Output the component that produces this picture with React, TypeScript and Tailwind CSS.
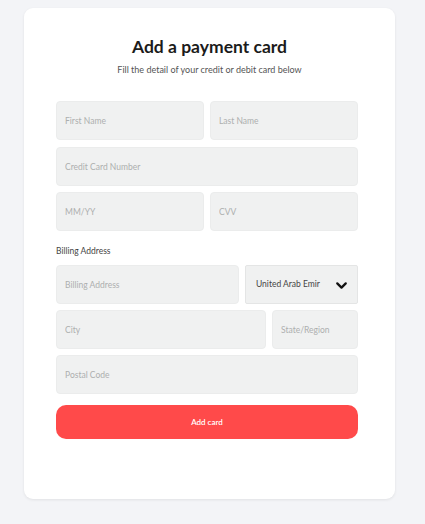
import { ChevronDown } from "lucide-react";

function Field({ placeholder, className = "" }: { placeholder: string; className?: string }) {
  return (
    <input
      placeholder={placeholder}
      className={`h-[39px] min-w-0 rounded-[4px] border border-[#ebecec] bg-[#f0f1f1] px-[8px] text-[8.5px] text-[#555] placeholder:text-[#adafaf] outline-none ${className}`}
    />
  );
}

export default function App() {
  return (
    <div className="min-h-screen bg-[#f3f4f7] pl-[24px] pt-[8px] pb-[25px]" style={{ fontFamily: "Lato, 'Open Sans', sans-serif" }}>
      <div className="w-[371px] rounded-[9px] bg-white pl-[32px] pr-[37px] pt-[30px] pb-[60px] shadow-[0_1px_3px_rgba(0,0,0,0.08)]">
        <h1 className="text-center text-[17.5px] font-bold leading-[18px] text-[#1b1b1b] pl-[5px]">
          Add a payment card
        </h1>
        <p className="mt-[9px] text-center text-[9px] leading-[10px] text-[#555] pl-[5px]">
          Fill the detail of your credit or debit card below
        </p>

        <form className="mt-[26px] flex flex-col" onSubmit={(e) => e.preventDefault()}>
          <div className="flex gap-[6px]">
            <Field placeholder="First Name" className="flex-1" />
            <Field placeholder="Last Name" className="flex-1" />
          </div>
          <Field placeholder="Credit Card Number" className="mt-[7px] w-full" />
          <div className="mt-[6px] flex gap-[6px]">
            <Field placeholder="MM/YY" className="flex-1" />
            <Field placeholder="CVV" className="flex-1" />
          </div>

          <label className="mt-[15px] text-[8.5px] leading-[10px] text-[#444]">Billing Address</label>

          <div className="mt-[9px] flex gap-[6px]">
            <Field placeholder="Billing Address" className="w-[183px]" />
            <div className="relative flex h-[39px] flex-1 items-center rounded-[2px] border border-[#e4e5e5] bg-[#f0f1f1] pl-[10px]">
              <span className="text-[8.5px] text-[#444]">United Arab Emir</span>
              <ChevronDown className="absolute right-[7px] top-[11px] h-[17px] w-[17px] text-[#111]" strokeWidth={3.2} />
            </div>
          </div>

          <div className="mt-[6px] flex gap-[6px]">
            <Field placeholder="City" className="w-[210px]" />
            <Field placeholder="State/Region" className="flex-1" />
          </div>
          <Field placeholder="Postal Code" className="mt-[6px] w-full" />

          <button
            type="submit"
            className="mt-[11px] h-[34px] w-full rounded-[10px] bg-[#ff4a4a] text-[8px] font-semibold text-white"
          >
            Add card
          </button>
        </form>
      </div>
    </div>
  );
}
